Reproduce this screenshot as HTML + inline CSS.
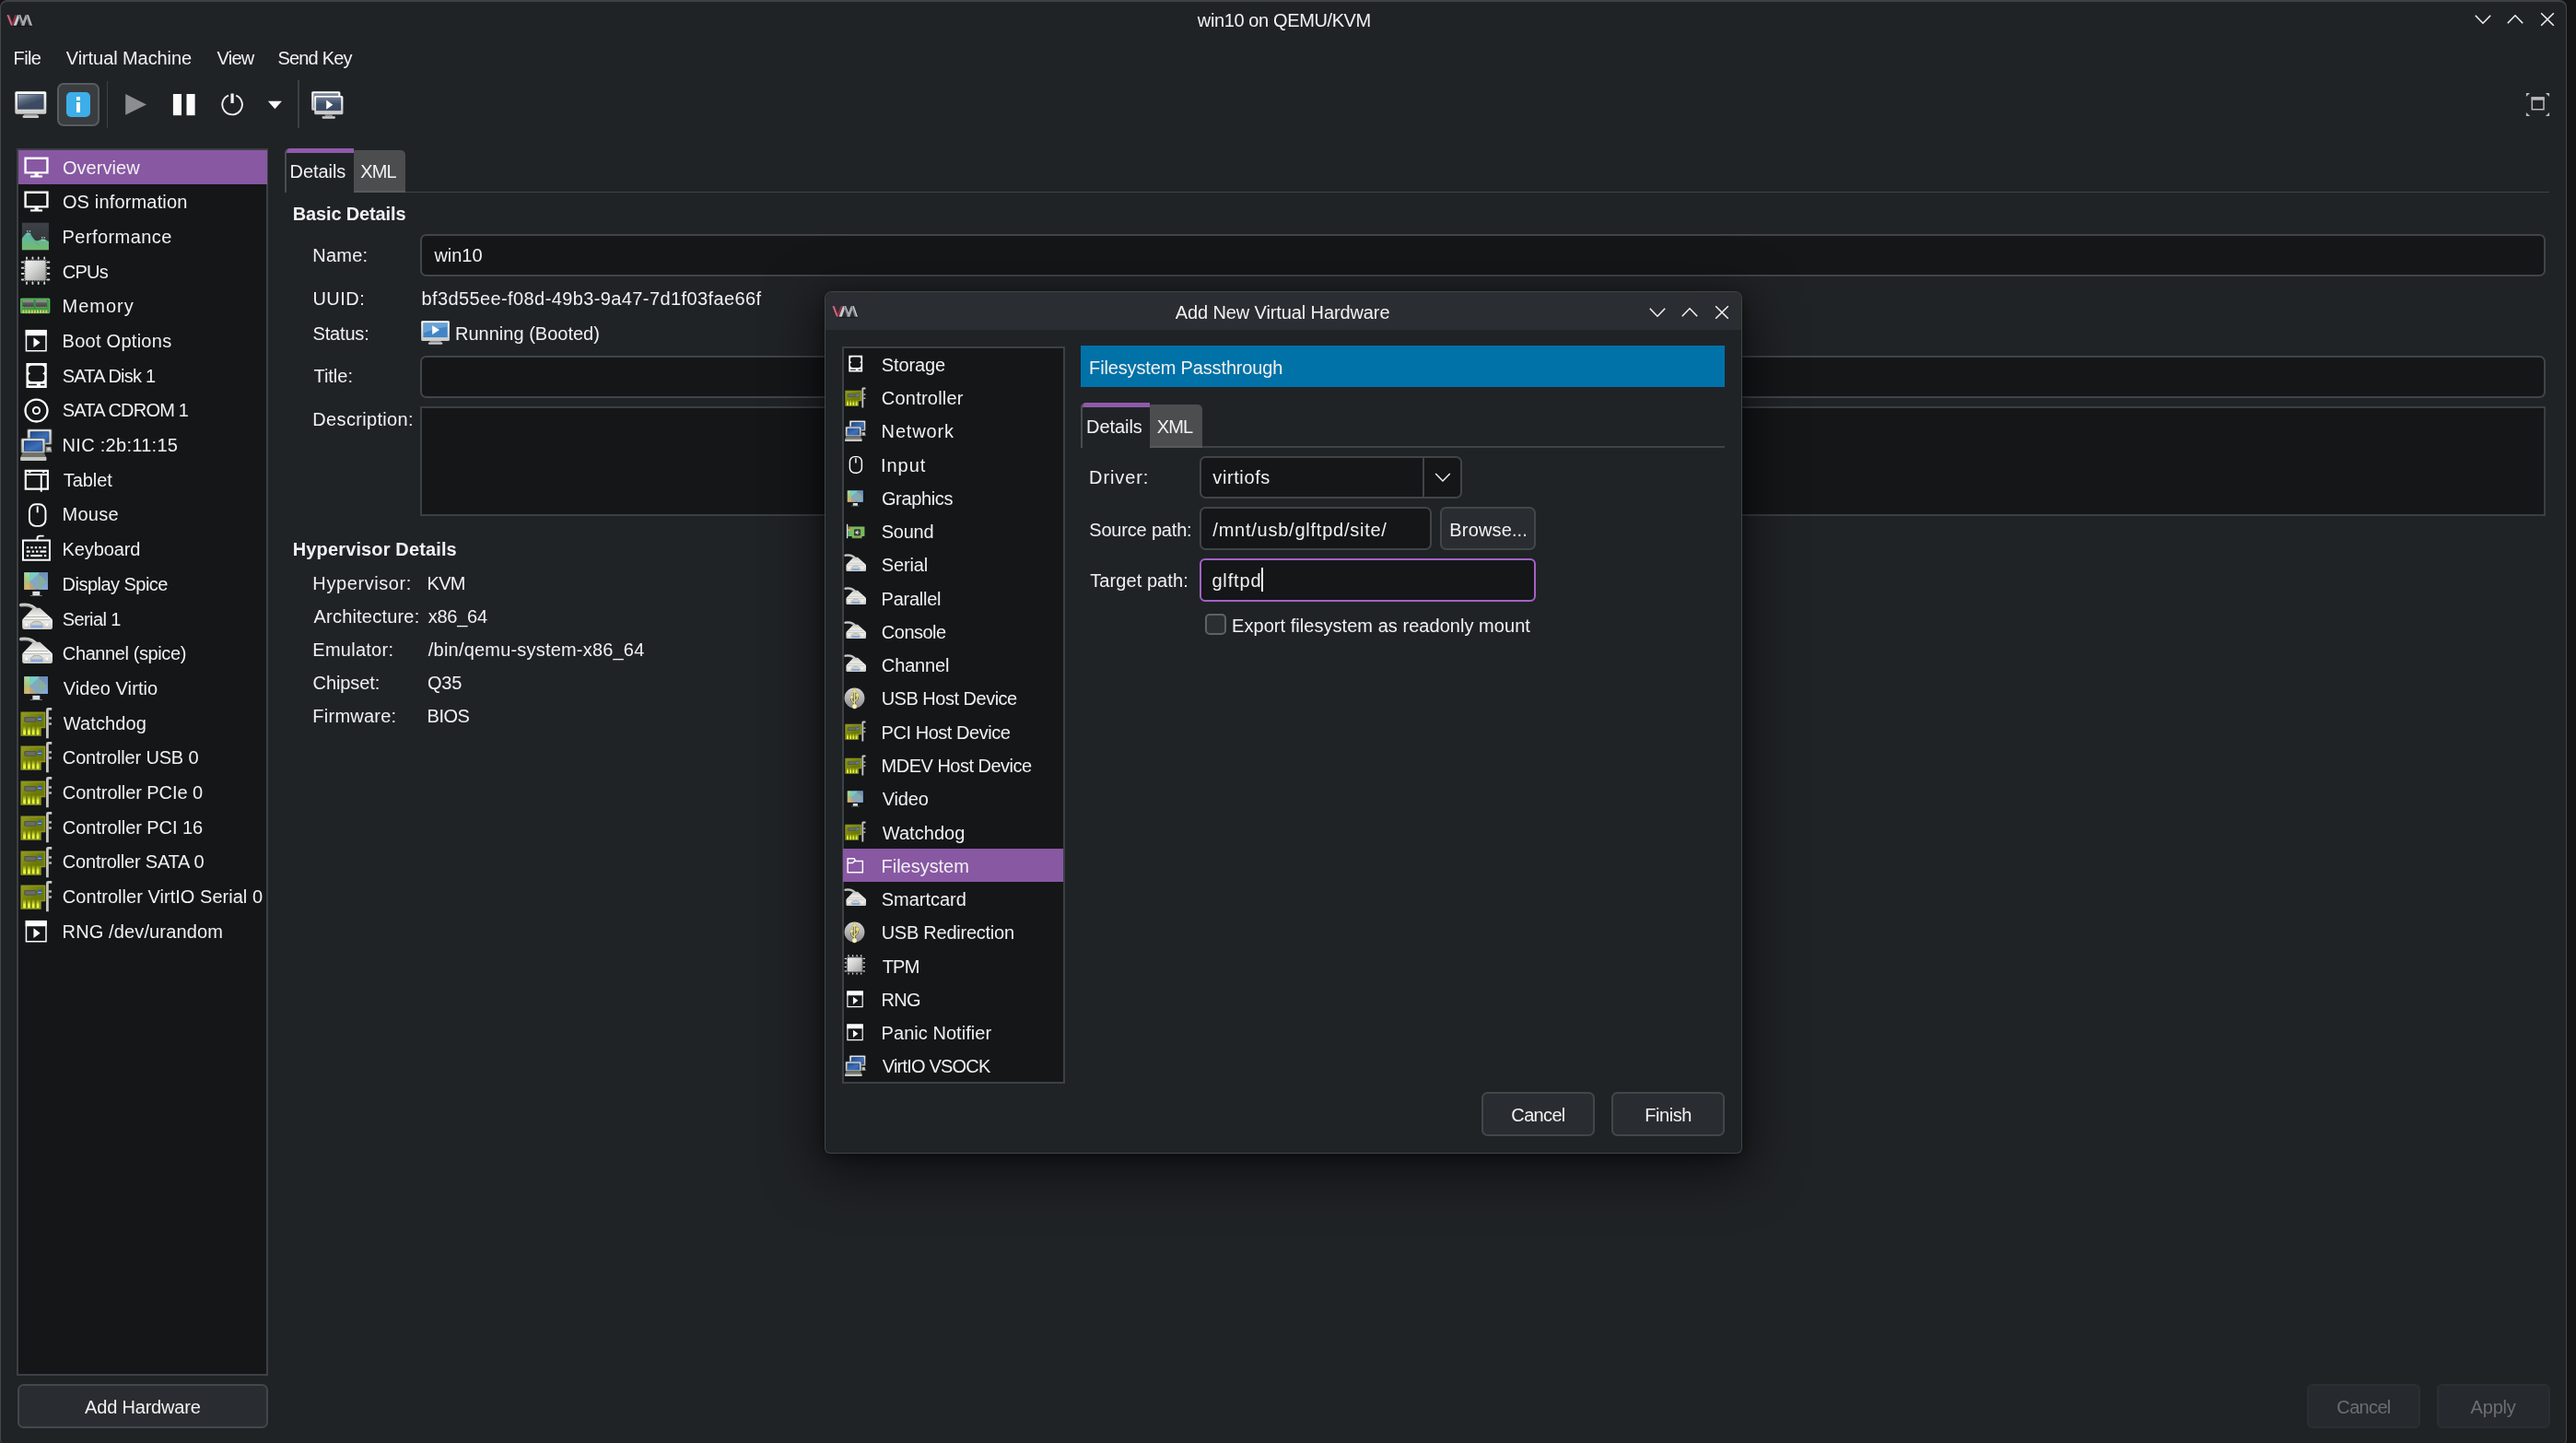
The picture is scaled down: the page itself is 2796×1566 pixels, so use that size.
<!DOCTYPE html>
<html><head><meta charset="utf-8"><title>win10 on QEMU/KVM</title>
<style>
html,body{margin:0;padding:0;}
body{width:2796px;height:1566px;overflow:hidden;background:#141414;position:relative;font-family:"Liberation Sans",sans-serif;font-size:20px;color:#f1f1f2;}
div,span,svg{position:absolute;box-sizing:border-box;}
.L{left:0;top:0;width:2796px;height:1566px;will-change:transform;}
.t{white-space:pre;line-height:20px;height:20px;}
#dlgtexts .t, #maintexts .t{}
</style></head><body>

<svg width="0" height="0" style="position:absolute"><defs><linearGradient id="gPerfBg" x1="0" y1="0" x2="0" y2="1"><stop offset="0" stop-color="#3d4247"/><stop offset="1" stop-color="#2c3034"/></linearGradient>
<linearGradient id="gPerfHill" x1="0" y1="0" x2="0" y2="1"><stop offset="0" stop-color="#58b6ae"/><stop offset=".5" stop-color="#69b68f"/><stop offset="1" stop-color="#76ba6c"/></linearGradient>
<linearGradient id="gCpu" x1="0" y1="0" x2="1" y2="1"><stop offset="0" stop-color="#f2f2f2"/><stop offset=".45" stop-color="#d4d4d2"/><stop offset="1" stop-color="#9d9d9b"/></linearGradient>
<linearGradient id="gChip" x1="0" y1="0" x2="0" y2="1"><stop offset="0" stop-color="#9c9c9a"/><stop offset=".45" stop-color="#5a5a58"/><stop offset="1" stop-color="#444442"/></linearGradient>
<linearGradient id="gBezel" x1="0" y1="0" x2="0" y2="1"><stop offset="0" stop-color="#e4e6e4"/><stop offset="1" stop-color="#bcbeb9"/></linearGradient>
<linearGradient id="gBlue" x1="0" y1="0" x2="1" y2="1"><stop offset="0" stop-color="#1d4a93"/><stop offset=".6" stop-color="#3f70b6"/><stop offset="1" stop-color="#2a5aa6"/></linearGradient>
<linearGradient id="gWallL" x1="0" y1="0" x2="0" y2="1"><stop offset="0" stop-color="#a9da9c"/><stop offset=".55" stop-color="#adc274"/><stop offset="1" stop-color="#e2b262"/></linearGradient><linearGradient id="gWallT" x1="0" y1="0" x2="1" y2="0"><stop offset="0" stop-color="#c8a474"/><stop offset="1" stop-color="#a09c90"/></linearGradient><linearGradient id="gWallR" x1="0" y1="0" x2="0" y2="1"><stop offset="0" stop-color="#6c8cb6"/><stop offset="1" stop-color="#8aaad8"/></linearGradient>
<linearGradient id="gSer" x1="0" y1="0" x2="0" y2="1"><stop offset="0" stop-color="#c4c5c1"/><stop offset=".42" stop-color="#f4f4f2"/><stop offset=".62" stop-color="#ecece9"/><stop offset="1" stop-color="#c9cac6"/></linearGradient>
<linearGradient id="gPci" x1="0" y1="0" x2="1" y2="1"><stop offset="0" stop-color="#8f9a1c"/><stop offset=".5" stop-color="#6f7c05"/><stop offset="1" stop-color="#66720a"/></linearGradient>
<linearGradient id="gPin" x1="0" y1="0" x2="0" y2="1"><stop offset="0" stop-color="#b9c229" stop-opacity=".2"/><stop offset=".55" stop-color="#dfee38"/><stop offset="1" stop-color="#e9fb42"/></linearGradient>
<linearGradient id="gUsb" x1="0" y1="0" x2="0" y2="1"><stop offset="0" stop-color="#d2d2d2"/><stop offset=".5" stop-color="#b4b4b4"/><stop offset="1" stop-color="#878787"/></linearGradient>
<linearGradient id="gTbBezel" x1="0" y1="0" x2="0" y2="1"><stop offset="0" stop-color="#ffffff"/><stop offset="1" stop-color="#c9c9c9"/></linearGradient>
<linearGradient id="gTbScr" x1="0" y1="0" x2=".6" y2="1"><stop offset="0" stop-color="#a3adbb"/><stop offset=".45" stop-color="#56647a"/><stop offset=".7" stop-color="#3d4b62"/><stop offset="1" stop-color="#3a4a63"/></linearGradient>
<linearGradient id="gTbScr2" x1="0" y1="0" x2="0" y2="1"><stop offset="0" stop-color="#6f7f95"/><stop offset=".5" stop-color="#3f4f68"/><stop offset="1" stop-color="#3a4a63"/></linearGradient>
<filter id="fSoft" x="-25%" y="-25%" width="150%" height="150%"><feGaussianBlur stdDeviation=".45"/></filter>
<filter id="fSoft2" x="-25%" y="-25%" width="150%" height="150%"><feGaussianBlur stdDeviation=".3"/></filter>
<filter id="fBlurS" x="-20%" y="-20%" width="140%" height="140%"><feGaussianBlur stdDeviation=".35"/></filter><symbol id="i-monitor" viewBox="0 0 32 32" overflow="visible"><path fill="none" stroke="currentColor" stroke-width="2.2" d="M5.1 7.1h21.8v14.3H5.1z"/><rect x="14.2" y="22" width="3.8" height="2.6" fill="currentColor"/><rect x="10" y="24.1" width="12" height="2" fill="currentColor"/></symbol><symbol id="i-perf" viewBox="0 0 32 32" overflow="visible"><g filter="url(#fSoft2)" transform="translate(-.7 -.2)"><rect x="2.400" y="2.700" width="26.600" height="27" fill="url(#gPerfBg)"/><path d="M2.400 18.300C4.500 15.500 6.300 12.400 8.700 12.400c2.600 0 4.600 7.900 8.400 8.200 2.600.2 4.100-1.800 6.100-1.800 2 0 3.600 1.600 5.800 2.500V29.700H2.400z" fill="url(#gPerfHill)"/><path d="M9.500 14.500l10 11" stroke="#4c9d90" stroke-width="1.400" opacity=".35"/><g fill="#e6f6ee" opacity=".8"><rect x="7.200" y="10.400" width="1.200" height="1.300"/><rect x="9.700" y="10.400" width="1.200" height="1.300"/><rect x="7.500" y="13.300" width="1" height="1"/><rect x="9.900" y="13.300" width="1" height="1"/><rect x="21.700" y="16.700" width="1.200" height="1.300"/><rect x="24.100" y="16.700" width="1.200" height="1.300"/><rect x="22" y="19.600" width="1" height="1"/><rect x="24.300" y="19.600" width="1" height="1"/></g></g></symbol><symbol id="i-cpu" viewBox="0 0 32 32" overflow="visible"><g filter="url(#fSoft)"><g stroke="#e9e9e9" stroke-width="1.700" stroke-linecap="round" opacity=".9"><path d="M6.400 2.200v1.300M12.300 2.200v1.300M18 2.200v1.300M23.950 2.200v1.300M6.400 27v1.300M12.300 27v1.300M18 27v1.300M23.950 27v1.300M1.600 6.900h1.500M1.600 12.600h1.500M1.600 18.300h1.500M1.600 24.200h1.500M27 6.900h1.700M27 12.600h1.700M27 18.300h1.700M27 24.200h1.700"/></g><rect x="4.750" y="5.300" width="20.550" height="19.600" rx="1" fill="url(#gCpu)"/><rect x="4.200" y="4.800" width="21.650" height="20.600" rx="1.200" fill="none" stroke="#f2f2f2" stroke-opacity=".55" stroke-width="1" stroke-dasharray="1.400 1"/></g></symbol><symbol id="i-mem" viewBox="0 0 32 32" overflow="visible"><g filter="url(#fSoft)" transform="translate(-.6 -.2)"><rect x=".7" y="8.200" width="29.400" height="15" rx="1" fill="#3c9a43"/><rect x="1.300" y="8.800" width="28.200" height="13.800" rx=".8" fill="none" stroke="#62b966" stroke-width="1"/><rect x="3" y="10.400" width="11" height="6.600" rx=".6" fill="url(#gChip)"/><rect x="16" y="10.400" width="11" height="6.600" rx=".6" fill="url(#gChip)"/><path d="M3.300 10.500h10.400M16.300 10.500h10.400M3.300 17h10.400M16.300 17h10.400" stroke="#b7b7b2" stroke-width=".9" stroke-dasharray="1 .8" opacity=".8"/><rect x="14.600" y="9.200" width="1" height="9.500" fill="#2f8a37"/><path d="M2.800 21.300h25.200" stroke="#dccf62" stroke-width="3" stroke-dasharray="1.800 1.050"/></g></symbol><symbol id="i-boot" viewBox="0 0 32 32" overflow="visible"><path fill="none" stroke="currentColor" stroke-width="1.400" d="M5.900 6.100h19.700v20.100H5.900z"/><rect x="5.200" y="5.400" width="21.100" height="5.800" fill="currentColor"/><path d="M13.200 13l6.600 4.950-6.600 4.950z" fill="currentColor"/></symbol><symbol id="i-disk" viewBox="0 0 32 32" overflow="visible"><path fill="currentColor" fill-rule="evenodd" d="M5.900 3.700h20.400v24.600H5.900zM11.400 6.200h9.400a3.300 3.300 0 0 1 3.300 3.300v2.300q0 1-1.900 2.200 1.900 1.200 1.900 2.200v2.400a3.300 3.300 0 0 1-3.300 3.300h-9.400a3.300 3.300 0 0 1-3.300-3.300v-2.400q0-1 1.900-2.200-1.900-1.200-1.900-2.200V9.500a3.300 3.300 0 0 1 3.300-3.300zM8.100 24.400h8.200v1.500H8.100zM20 24.400h4.100v1.500H20z"/></symbol><symbol id="i-disk_s" viewBox="0 0 32 32" overflow="visible"><path fill="currentColor" fill-rule="evenodd" d="M5.500 3.500h21v25h-21zM11.800 7h8.600a2.600 2.600 0 0 1 2.600 2.600v3l-1.400 1.300 1.400 1.300v3a2.600 2.600 0 0 1-2.600 2.600h-8.600a2.600 2.600 0 0 1-2.600-2.600v-3l1.400-1.300-1.400-1.300v-3A2.600 2.600 0 0 1 11.800 7zM8.800 23.700h7.600v1.900H8.800zM19.600 23.700h3.800v1.900h-3.800z"/></symbol><symbol id="i-cd" viewBox="0 0 32 32" overflow="visible"><circle cx="16" cy="16" r="10.950" fill="none" stroke="currentColor" stroke-width="2.100"/><circle cx="16" cy="16" r="3.300" fill="none" stroke="currentColor" stroke-width="1.800"/></symbol><symbol id="i-nic" viewBox="0 0 32 32" overflow="visible"><g filter="url(#fSoft2)"><rect x="6.7" y="0.4" width="24.8" height="15.9" rx="1.300" fill="#62635d"/><rect x="7.5" y="1.2" width="23.2" height="14.3" rx="1" fill="url(#gBezel)"/><rect x="9.796" y="3.08" width="18.856" height="11.017" rx=".6" fill="#17386e"/><rect x="10.296" y="3.58" width="17.856" height="10.017" rx=".5" fill="url(#gBlue)"/><path d="M25.400 18.100h5.200l.9 5.500h-6.100z" fill="#8b8c86"/><path d="M26.600 19.600l2.300-1.200 1.900 3.400h-4.200z" fill="#cfd0ca"/><rect x="0.6" y="9.5" width="24.4" height="15.2" rx="1.300" fill="#62635d"/><rect x="1.4" y="10.3" width="22.8" height="13.6" rx="1" fill="url(#gBezel)"/><rect x="3.638" y="12.04" width="18.568" height="10.576" rx=".6" fill="#17386e"/><rect x="4.138" y="12.54" width="17.568" height="9.576" rx=".5" fill="url(#gBlue)"/><path d="M2 24.700h21.800l2.200 4H.1z" fill="#70716b"/><rect x=".1" y="28.400" width="25.900" height="3.500" rx=".8" fill="#c6c8c2"/></g></symbol><symbol id="i-tablet" viewBox="0 0 32 32" overflow="visible"><path fill="none" stroke="currentColor" stroke-width="2" d="M5.300 7.200h22v18H5.300z"/><path stroke="currentColor" stroke-width="1.800" d="M5.300 10.900h22M20.800 10.900v17.300" fill="none"/><rect x="8.300" y="7.200" width="2.200" height="2.200" fill="currentColor"/><rect x="22" y="7.200" width="2.200" height="2.200" fill="currentColor"/></symbol><symbol id="i-mouse" viewBox="0 0 32 32" overflow="visible"><rect x="9.100" y="5.700" width="16" height="21.600" rx="6.200" ry="6.600" fill="none" stroke="currentColor" stroke-width="1.800"/><path d="M17.100 7.800v6.200" stroke="currentColor" stroke-width="1.800" fill="none"/></symbol><symbol id="i-kbd" viewBox="0 0 32 32" overflow="visible"><path fill="none" stroke="currentColor" stroke-width="1.800" d="M2.700 7.800h26.500v19.300H2.700zM16.900 7.800V5.600q0-2.300 2.300-2.300h4.200"/><g fill="currentColor"><rect x="6.200" y="13.800" width="2.200" height="2"/><rect x="10.300" y="13.800" width="2.200" height="2"/><rect x="14.400" y="13.800" width="2.200" height="2"/><rect x="18.500" y="13.800" width="2.200" height="2"/><rect x="22.600" y="13.800" width="3.200" height="2"/><rect x="6.200" y="17.800" width="3.600" height="2"/><rect x="11.600" y="17.800" width="2.200" height="2"/><rect x="15.600" y="17.800" width="2.200" height="2"/><rect x="19.600" y="17.800" width="6.200" height="2"/><rect x="6.200" y="21.900" width="2.200" height="2"/><rect x="10.300" y="21.900" width="11.400" height="2"/><rect x="23.600" y="21.900" width="2.200" height="2"/></g></symbol><symbol id="i-display" viewBox="0 0 32 32" overflow="visible"><g filter="url(#fSoft2)"><rect x="3.300" y="4.200" width="24.600" height="18.200" fill="#0e1012"/><rect x="3.900" y="4.800" width="23.400" height="17" fill="#82a9c0"/><rect x="3.900" y="4.800" width="5.300" height="17" fill="url(#gWallL)"/><path d="M9.200 4.800h10.400L9.200 14.200z" fill="#74cfc5"/><path d="M9.200 14.200l7.400 7.600H9.200z" fill="url(#gWallT)"/><rect x="18.500" y="4.800" width="8.800" height="17" fill="url(#gWallR)"/><path d="M18.500 6.600l7.600 7.300-7.600 7.900z" fill="#87ae98"/><rect x="12.250" y="23.600" width="7.150" height="4" fill="#dfe3e6"/><path d="M12.250 25.600h7.150" stroke="#c4c8cc" stroke-width=".5"/><rect x="9.800" y="27.500" width="12" height=".8" fill="#7c8084"/></g></symbol><symbol id="i-serial" viewBox="0 0 32 32" overflow="visible"><g filter="url(#fSoft2)"><path d="M.600 2.400C8 1.400 13.500 3.200 16.300 8.200" fill="none" stroke="#aeafab" stroke-width="3.300" stroke-linecap="round"/><path d="M.600 2C8 1 13.500 2.600 16.600 7.400" fill="none" stroke="#dcdcda" stroke-width="1.100" stroke-linecap="round"/><path d="M13 5.200h6.500L31 15.800q1 .9 1 2.200v6.600q0 1.900-1.900 1.900H3.900Q2 26.500 2 24.600V18q0-1.300 1-2.200z" fill="url(#gSer)"/><path d="M5 14.200h22.400M3 17.200h26.800" stroke="#b4b5b0" stroke-width="1"/><path d="M10.500 22.600q0-4 5.800-4t5.800 4" fill="#cfd0cc" stroke="#a9aaa6" stroke-width=".9"/><rect x="10.200" y="22.300" width="12.200" height="2.700" rx=".6" fill="#7fa3dc"/><path d="M10.600 23.600h11.400" stroke="#a8c2ea" stroke-width=".9" stroke-dasharray="1.100 .9"/><rect x="5" y="20.800" width="2.200" height="2.200" fill="#fff"/><rect x="25.300" y="20.800" width="2.200" height="2.200" fill="#fff"/><rect x="7.300" y="23" width="2" height="2" fill="#d0d0cc"/><rect x="23" y="23" width="2" height="2" fill="#d0d0cc"/></g></symbol><symbol id="i-pci" viewBox="0 0 32 32" overflow="visible"><g filter="url(#fSoft2)"><path d="M.4 5.100H25v16.200h-4.200V29H.4z" fill="#8c9320"/><path d="M1.900 6.600h21.600v13.200h-4.200V27.500H1.900z" fill="url(#gPci)"/><rect x="3.900" y="10" width="12.200" height="5.300" rx="1.300" fill="#51554d"/><rect x="4.900" y="10.900" width="10.200" height="3.500" rx=".9" fill="#686c63"/><rect x="17.100" y="9.700" width="4.300" height="4.600" rx=".9" fill="#3b5fa6"/><path d="M17.600 12.300h3.300" stroke="#8fb0e0" stroke-width="1"/><g fill="url(#gPin)"><rect x="2.800" y="19.500" width="2.700" height="8.400" rx="1.200"/><rect x="7.300" y="19.500" width="2.700" height="8.400" rx="1.200"/><rect x="11.600" y="19.500" width="2.700" height="8.400" rx="1.200"/><rect x="16.100" y="19.500" width="2.700" height="8.400" rx="1.200"/></g><path d="M31.300 2.100h-3.600q-.8 0-.8.800V31.400" fill="none" stroke="#c9cac5" stroke-width="2.500"/><rect x="28.300" y="10.300" width="2.800" height="2.100" fill="#b9bab5"/><rect x="28.300" y="15.900" width="2.800" height="2.100" fill="#b9bab5"/></g></symbol><symbol id="i-usb" viewBox="0 0 32 32" overflow="visible"><g filter="url(#fSoft)"><circle cx="16" cy="16" r="15.200" fill="url(#gUsb)"/><g fill="#2f2f2c" stroke="#2f2f2c" opacity=".75"><path d="M16 7V27.500M11.600 15.500v3.600q0 1.500 4.400 4.600M20.400 13v3.400q0 1.500-4.400 4.600" fill="none" stroke-width="3.400"/><path d="M16 1.900l3.400 5.500h-6.800z"/><circle cx="16" cy="28.700" r="3.200"/><circle cx="11.600" cy="14.300" r="2.200"/><rect x="18.300" y="9.400" width="4.300" height="4.300" rx="1"/></g><g fill="#e9dd7c" stroke="#e9dd7c"><path d="M16 7V27.500M11.600 15.500v3.600q0 1.500 4.400 4.600M20.400 13v3.400q0 1.500-4.400 4.600" fill="none" stroke-width="1.700"/><path d="M16 1.900l3.400 5.500h-6.800z"/><circle cx="16" cy="28.700" r="3.200"/><circle cx="11.600" cy="14.300" r="2.200"/><rect x="18.300" y="9.400" width="4.300" height="4.300" rx="1"/></g><circle cx="16" cy="28.700" r="3" fill="#f6f1c4"/></g></symbol><symbol id="i-sound" viewBox="0 0 32 32" overflow="visible"><g filter="url(#fSoft2)"><path d="M4.600 9h25.200v14.800h-4v1.600h-15.100v-1.600H4.600z" fill="#79b95c"/><path d="M10.700 25.400h15.100v1.300H10.700z" fill="#8fb65a"/><rect x="13.900" y="12.800" width="9.900" height="10.100" rx="1.800" fill="#383b38"/><path d="M16.300 16.700h1.400l1.900-1.700v5.800l-1.900-1.700h-1.400zM20.700 16.300q1.300 1.600 0 3.200" fill="#d8dad8" stroke="#d8dad8" stroke-width=".5"/><path d="M3.600 5.300v21.400" stroke="#d7e2ee" stroke-width="1.900"/><rect x="4.600" y="10" width="2.900" height="2.500" fill="#e23a72"/><rect x="4.600" y="13" width="2.900" height="2.500" fill="#f0b324"/><rect x="4.600" y="16.500" width="2.900" height="2.500" fill="#32a2e2"/><rect x="4.600" y="19.600" width="2.900" height="2.500" fill="#34c274"/></g></symbol><symbol id="i-folder" viewBox="0 0 32 32" overflow="visible"><path fill="none" stroke="currentColor" stroke-width="1.900" d="M5.400 6.300h9.200l2.200 3.600h9.800v15.800H5.400zM5.400 12.400h7l2.600-2.500h2"/></symbol></defs></svg>
<div style="left:0;top:0;width:2786px;height:1569.5px;background:#202326;border-radius:8px;border:1px solid #44464a;border-top:2px solid #3f4144"></div>
<svg style="left:7.2px;top:15.6px;width:29px;height:13px;overflow:visible" viewBox="0 0 29 13"><g filter="url(#fBlurS)"><path d="M0 .2h3.400l2.900 7.900L9.300.2h2.300L7.300 11.800H4.500z" fill="#8f2b44"/><path d="M.9.2h1.200l3.800 10-.5 1.600z" fill="#d9c3ca" opacity=".7"/><path d="M7.600 11.800L11.900.2h3l-4.100 11.600z" fill="#c6c9cc"/><path d="M12.600.2h2.600l4.200 11.600h-3z" fill="#6c7076"/><path d="M13.900.2h1.300l4.200 11.600h-1.300z" fill="#b9bcc0"/><path d="M16.400 11.800L20.600.2h2.800l-4 11.600z" fill="#a4a8ad"/><path d="M21 .2h2.800l4 11.600h-3.100z" fill="#7d8186"/><path d="M22.600.2h1.200l4 11.600h-1.200z" fill="#d2d4d7"/><path d="M7 12.300h21" stroke="#0c0d0e" stroke-width=".8" opacity=".6"/></g></svg>
<svg style="left:2645px;top:9.4px;width:100px;height:24px;overflow:visible" viewBox="0 0 100 24"><g fill="none" stroke="#f4f4f4" stroke-width="1.500"><path d="M41.8 7.800l8.200 8.400 8.200-8.400"/><path d="M76.8 16.200l8.200-8.400 8.200 8.400"/><path d="M113.2 5.200l13.600 13.600M126.8 5.200l-13.600 13.600"/></g></svg>
<svg style="left:15.8px;top:99.2px;width:35px;height:30px;overflow:visible" viewBox="0 0 35 30"><g filter="url(#fBlurS)"><rect x=".3" y=".2" width="34" height="24.500" rx="1.600" fill="url(#gTbBezel)"/><rect x="3.400" y="3.400" width="27.700" height="15.800" fill="url(#gTbScr)"/><rect x="3.400" y="3.400" width="27.700" height="15.800" fill="none" stroke="#2e3b52" stroke-width=".7"/><rect x="10.200" y="24.600" width="14.400" height="1.900" fill="#8c8c8c"/><rect x="8.600" y="26.300" width="17.500" height="2.700" rx="1.200" fill="#cbcbcb"/></g></svg>
<div style="left:62px;top:90px;width:46.2px;height:46.7px;background:#3a3d40;border:2px solid #585b5f;border-radius:7px"></div>
<div style="left:72px;top:99.9px;width:26.2px;height:26.8px;background:#3daee9;border-radius:5px"></div>
<div style="left:83px;top:104.5px;width:4.3px;height:4.5px;background:#fff"></div>
<div style="left:83px;top:111.3px;width:4.3px;height:10.7px;background:#fff"></div>
<div style="left:115.8px;top:87.6px;width:1.5px;height:51.6px;background:#3c3f43"></div>
<div style="left:323.1px;top:87.2px;width:1.5px;height:52px;background:#3c3f43"></div>
<svg style="left:130px;top:95px;width:190px;height:36px" viewBox="130 95 190 36"><path d="M136.200 102l22.800 11.400-22.800 11.400z" fill="#8b8d8f"/><rect x="187.900" y="102" width="9.100" height="23.200" fill="#fcfcfc"/><rect x="202.500" y="102" width="9.100" height="23.200" fill="#fcfcfc"/><path d="M256.200 103.600A10.800 10.800 0 1 1 248 103.600" fill="none" stroke="#f0f0f0" stroke-width="1.900"/><path d="M252.100 101.500v10.500" stroke="#f4f4f4" stroke-width="3.200"/><path d="M290.900 109.800h15l-7.500 8.400z" fill="#fcfcfc"/></svg>
<svg style="left:337.7px;top:98.7px;width:35px;height:30px;overflow:visible" viewBox="0 0 35 30"><g filter="url(#fBlurS)"><rect x=".2" y=".2" width="31.200" height="20.500" rx="1.500" fill="url(#gTbBezel)"/><rect x="2.300" y="2.200" width="27" height="16" fill="#7b8798"/><rect x="3.200" y="4.900" width="31.200" height="20.300" rx="1.500" fill="url(#gTbBezel)"/><rect x="5.100" y="6.600" width="27.100" height="14.600" fill="url(#gTbScr2)"/><path d="M16.200 9.600l7.100 5.050-7.100 5.050z" fill="#fff"/><rect x="14.700" y="25.200" width="8.100" height="2.100" fill="#8c8c8c"/><rect x="11.500" y="27.200" width="14.500" height="2.500" rx="1.100" fill="#cbcbcb"/></g></svg>
<svg style="left:2741px;top:100px;width:27px;height:27px" viewBox="0 0 27 27"><path d="M7.300 6h12.700v12.700H7.300z" fill="none" stroke="#b9babb" stroke-width="1.500"/><rect x="6.600" y="5.300" width="14.100" height="3.400" fill="#b9babb"/><g fill="#b9babb"><path d="M.9.900h4.200L.9 5.100zM26.100.900v4.200L21.900.900zM.9 26.100v-4.200l4.200 4.200zM26.100 26.100h-4.200l4.200-4.200z"/></g></svg>
<div style="left:18px;top:161px;width:273px;height:1332px;background:#141618;border:2px solid #3c3f43"></div>
<div style="left:20px;top:162.5px;width:269.6px;height:37.59px;background:#8858a3"></div>
<svg style="left:21.5px;top:163.75px;width:35px;height:35px;color:#fcfcfc;overflow:visible"><use href="#i-monitor"/></svg>
<svg style="left:21.5px;top:201.44px;width:35px;height:35px;color:#fcfcfc;overflow:visible"><use href="#i-monitor"/></svg>
<svg style="left:21.5px;top:239.12px;width:35px;height:35px;color:#fcfcfc;overflow:visible"><use href="#i-perf"/></svg>
<svg style="left:21.5px;top:276.81px;width:35px;height:35px;color:#fcfcfc;overflow:visible"><use href="#i-cpu"/></svg>
<svg style="left:21.5px;top:314.5px;width:35px;height:35px;color:#fcfcfc;overflow:visible"><use href="#i-mem"/></svg>
<svg style="left:21.5px;top:352.19px;width:35px;height:35px;color:#fcfcfc;overflow:visible"><use href="#i-boot"/></svg>
<svg style="left:21.5px;top:389.88px;width:35px;height:35px;color:#fcfcfc;overflow:visible"><use href="#i-disk"/></svg>
<svg style="left:21.5px;top:427.57px;width:35px;height:35px;color:#fcfcfc;overflow:visible"><use href="#i-cd"/></svg>
<svg style="left:21.5px;top:465.26px;width:35px;height:35px;color:#fcfcfc;overflow:visible"><use href="#i-nic"/></svg>
<svg style="left:21.5px;top:502.95px;width:35px;height:35px;color:#fcfcfc;overflow:visible"><use href="#i-tablet"/></svg>
<svg style="left:21.5px;top:540.64px;width:35px;height:35px;color:#fcfcfc;overflow:visible"><use href="#i-mouse"/></svg>
<svg style="left:21.5px;top:578.33px;width:35px;height:35px;color:#fcfcfc;overflow:visible"><use href="#i-kbd"/></svg>
<svg style="left:21.5px;top:616.02px;width:35px;height:35px;color:#fcfcfc;overflow:visible"><use href="#i-display"/></svg>
<svg style="left:21.5px;top:653.71px;width:35px;height:35px;color:#fcfcfc;overflow:visible"><use href="#i-serial"/></svg>
<svg style="left:21.5px;top:691.4px;width:35px;height:35px;color:#fcfcfc;overflow:visible"><use href="#i-serial"/></svg>
<svg style="left:21.5px;top:729.09px;width:35px;height:35px;color:#fcfcfc;overflow:visible"><use href="#i-display"/></svg>
<svg style="left:21.5px;top:766.78px;width:35px;height:35px;color:#fcfcfc;overflow:visible"><use href="#i-pci"/></svg>
<svg style="left:21.5px;top:804.47px;width:35px;height:35px;color:#fcfcfc;overflow:visible"><use href="#i-pci"/></svg>
<svg style="left:21.5px;top:842.16px;width:35px;height:35px;color:#fcfcfc;overflow:visible"><use href="#i-pci"/></svg>
<svg style="left:21.5px;top:879.85px;width:35px;height:35px;color:#fcfcfc;overflow:visible"><use href="#i-pci"/></svg>
<svg style="left:21.5px;top:917.54px;width:35px;height:35px;color:#fcfcfc;overflow:visible"><use href="#i-pci"/></svg>
<svg style="left:21.5px;top:955.23px;width:35px;height:35px;color:#fcfcfc;overflow:visible"><use href="#i-pci"/></svg>
<svg style="left:21.5px;top:992.92px;width:35px;height:35px;color:#fcfcfc;overflow:visible"><use href="#i-boot"/></svg>
<div style="left:19px;top:1502px;width:272.3px;height:47.6px;background:#292c30;border:2px solid #43464a;border-radius:6.500px"></div>
<div style="left:2504px;top:1502px;width:123px;height:47.6px;background:#26292d;border:2px solid #2b2e32;border-radius:6px"></div>
<div style="left:2644.5px;top:1502px;width:123px;height:47.6px;background:#26292d;border:2px solid #2b2e32;border-radius:6px"></div>
<div style="left:309.3px;top:207.5px;width:2458.2px;height:1.700px;background:#3f4246"></div>
<div style="left:384.1px;top:162.8px;width:56px;height:46.5px;background:#4b4d4f;border-radius:0 5px 0 0;border-bottom:2px solid #57595b"></div>
<div style="left:309.3px;top:161px;width:74.8px;height:48.3px;background:#202326;border-left:2px solid #4a4d50;border-radius:5px 0 0 0;overflow:hidden"><div style="left:-2px;top:0;width:78.8px;height:4.600px;background:#8e5ba9"></div></div>
<div style="left:456.3px;top:254.3px;width:2306.9px;height:45.5px;background:#141618;border:2px solid #414448;border-radius:6.500px"></div>
<svg style="left:456.700px;top:347.900px;width:31.400px;height:26.500px;overflow:visible" viewBox="0 0 32 27" preserveAspectRatio="none"><g filter="url(#fBlurS)"><rect x=".2" y=".2" width="31.300" height="22.300" rx="1.400" fill="url(#gTbBezel)"/><rect x="2.400" y="2.300" width="26.900" height="16.200" fill="#4285c6"/><path d="M2.400 2.300h26.900v4.500q-14 1.500-26.900 7z" fill="#8db9e0" opacity=".55"/><path d="M12.400 5.300l8 5-8 5z" fill="#fff"/><rect x="9.700" y="22.400" width="12.400" height="1.700" fill="#8c8c8c"/><rect x="8" y="24" width="15.800" height="2.300" rx="1" fill="#c9c9c9"/></g></svg>
<div style="left:456.3px;top:386px;width:2306.9px;height:45.5px;background:#141618;border:2px solid #414448;border-radius:6.500px"></div>
<div style="left:456.3px;top:441px;width:2306.9px;height:118.6px;background:#141618;border:2px solid #3b3e42"></div>
<div class="L">
<span class="t" style="left:1299.86px;top:12px;letter-spacing:-0.385px;">win10 on QEMU/KVM</span>
<span class="t" style="left:14.61px;top:52.6px;letter-spacing:-0.637px;">File</span>
<span class="t" style="left:71.77px;top:52.6px;letter-spacing:-0.080px;">Virtual Machine</span>
<span class="t" style="left:235.57px;top:52.6px;letter-spacing:-0.800px;">View</span>
<span class="t" style="left:301.45px;top:52.6px;letter-spacing:-0.800px;">Send Key</span>
<span class="t" style="left:67.9px;top:171.55px;letter-spacing:0.056px;">Overview</span>
<span class="t" style="left:67.9px;top:209.24px;letter-spacing:0.162px;">OS information</span>
<span class="t" style="left:67.61px;top:246.93px;letter-spacing:0.415px;">Performance</span>
<span class="t" style="left:67.87px;top:284.62px;letter-spacing:-0.800px;">CPUs</span>
<span class="t" style="left:67.61px;top:322.31px;letter-spacing:0.980px;">Memory</span>
<span class="t" style="left:67.61px;top:360px;letter-spacing:0.263px;">Boot Options</span>
<span class="t" style="left:67.75px;top:397.69px;letter-spacing:-0.800px;">SATA Disk 1</span>
<span class="t" style="left:67.75px;top:435.37px;letter-spacing:-0.800px;">SATA CDROM 1</span>
<span class="t" style="left:67.61px;top:473.06px;letter-spacing:0.283px;">NIC :2b:11:15</span>
<span class="t" style="left:68.7px;top:510.75px;letter-spacing:-0.039px;">Tablet</span>
<span class="t" style="left:67.61px;top:548.44px;letter-spacing:0.222px;">Mouse</span>
<span class="t" style="left:67.61px;top:586.13px;letter-spacing:-0.113px;">Keyboard</span>
<span class="t" style="left:67.61px;top:623.82px;letter-spacing:-0.530px;">Display Spice</span>
<span class="t" style="left:67.75px;top:661.51px;letter-spacing:-0.601px;">Serial 1</span>
<span class="t" style="left:67.87px;top:699.2px;letter-spacing:-0.399px;">Channel (spice)</span>
<span class="t" style="left:68.77px;top:736.89px;letter-spacing:0.076px;">Video Virtio</span>
<span class="t" style="left:68.8px;top:774.58px;letter-spacing:0.100px;">Watchdog</span>
<span class="t" style="left:67.87px;top:812.27px;letter-spacing:-0.158px;">Controller USB 0</span>
<span class="t" style="left:67.87px;top:849.96px;letter-spacing:-0.073px;">Controller PCIe 0</span>
<span class="t" style="left:67.87px;top:887.65px;letter-spacing:-0.070px;">Controller PCI 16</span>
<span class="t" style="left:67.87px;top:925.34px;letter-spacing:-0.211px;">Controller SATA 0</span>
<span class="t" style="left:67.87px;top:963.03px;letter-spacing:0.033px;">Controller VirtIO Serial 0</span>
<span class="t" style="left:67.61px;top:1000.72px;letter-spacing:0.126px;">RNG /dev/urandom</span>
<span class="t" style="left:92.04px;top:1516.8px;letter-spacing:-0.183px;">Add Hardware</span>
<span class="t" style="left:2536.37px;top:1516.9px;letter-spacing:-0.663px;color:#6b6e72;">Cancel</span>
<span class="t" style="left:2681.54px;top:1516.9px;letter-spacing:-0.175px;color:#6b6e72;">Apply</span>
<span class="t" style="left:314.61px;top:175.8px;letter-spacing:-0.063px;">Details</span>
<span class="t" style="left:391.14px;top:175.8px;letter-spacing:-0.800px;">XML</span>
<span class="t" style="left:317.75px;top:222.4px;letter-spacing:-0.145px;font-weight:700;">Basic Details</span>
<span class="t" style="left:339.36px;top:267.3px;letter-spacing:0.224px;">Name:</span>
<span class="t" style="left:471.46px;top:267.3px;letter-spacing:-0.040px;">win10</span>
<span class="t" style="left:339.41px;top:313.8px;letter-spacing:0.489px;">UUID:</span>
<span class="t" style="left:457.51px;top:313.8px;letter-spacing:0.394px;">bf3d55ee-f08d-49b3-9a47-7d1f03fae66f</span>
<span class="t" style="left:339.5px;top:351.55px;letter-spacing:-0.171px;">Status:</span>
<span class="t" style="left:494.01px;top:351.55px;letter-spacing:0.010px;">Running (Booted)</span>
<span class="t" style="left:340.45px;top:397.8px;letter-spacing:-0.018px;">Title:</span>
<span class="t" style="left:339.36px;top:445.3px;letter-spacing:0.318px;">Description:</span>
<span class="t" style="left:317.75px;top:585.8px;letter-spacing:0.139px;font-weight:700;">Hypervisor Details</span>
<span class="t" style="left:339.36px;top:622.5px;letter-spacing:0.589px;">Hypervisor:</span>
<span class="t" style="left:463.61px;top:622.5px;letter-spacing:-0.756px;">KVM</span>
<span class="t" style="left:340.54px;top:658.58px;letter-spacing:0.203px;">Architecture:</span>
<span class="t" style="left:464.66px;top:658.58px;letter-spacing:-0.231px;">x86_64</span>
<span class="t" style="left:339.36px;top:694.66px;letter-spacing:0.250px;">Emulator:</span>
<span class="t" style="left:464.85px;top:694.66px;letter-spacing:0.198px;">/bin/qemu-system-x86_64</span>
<span class="t" style="left:339.62px;top:730.74px;letter-spacing:-0.092px;">Chipset:</span>
<span class="t" style="left:463.9px;top:730.74px;letter-spacing:-0.194px;">Q35</span>
<span class="t" style="left:339.36px;top:766.82px;letter-spacing:0.237px;">Firmware:</span>
<span class="t" style="left:463.61px;top:766.82px;letter-spacing:-0.519px;">BIOS</span>
</div>
<div style="left:895.5px;top:317px;width:994px;height:934px;background:#202326;border-radius:7px 7px 5px 5px;box-shadow:0 0 0 1px rgba(70,73,77,.9),0 14px 56px 8px rgba(0,0,0,.6),0 3px 14px rgba(0,0,0,.45);overflow:hidden"><div style="left:0;top:0;width:100%;height:41px;background:#2a2d31"></div></div>
<svg style="left:902.8px;top:332.2px;width:29px;height:13px;overflow:visible" viewBox="0 0 29 13"><g filter="url(#fBlurS)"><path d="M0 .2h3.400l2.900 7.900L9.300.2h2.300L7.300 11.800H4.500z" fill="#8f2b44"/><path d="M.9.2h1.200l3.800 10-.5 1.600z" fill="#d9c3ca" opacity=".7"/><path d="M7.600 11.800L11.900.2h3l-4.100 11.600z" fill="#c6c9cc"/><path d="M12.600.2h2.600l4.200 11.600h-3z" fill="#6c7076"/><path d="M13.900.2h1.300l4.200 11.600h-1.300z" fill="#b9bcc0"/><path d="M16.400 11.800L20.600.2h2.800l-4 11.600z" fill="#a4a8ad"/><path d="M21 .2h2.800l4 11.600h-3.100z" fill="#7d8186"/><path d="M22.600.2h1.200l4 11.600h-1.200z" fill="#d2d4d7"/><path d="M7 12.300h21" stroke="#0c0d0e" stroke-width=".8" opacity=".6"/></g></svg>
<svg style="left:1748.75px;top:326.6px;width:100px;height:24px;overflow:visible" viewBox="0 0 100 24"><g fill="none" stroke="#f4f4f4" stroke-width="1.500"><path d="M41.8 7.800l8.200 8.400 8.200-8.400"/><path d="M76.8 16.200l8.200-8.400 8.200 8.400"/><path d="M113.2 5.200l13.600 13.600M126.8 5.200l-13.600 13.600"/></g></svg>
<div style="left:913.5px;top:375.7px;width:242px;height:800px;background:#141618;border:2px solid #3d4044"></div>
<div style="left:915.2px;top:921.05px;width:239px;height:36.27px;background:#8858a3"></div>
<svg style="left:916.65px;top:383.29px;width:23.3px;height:23.3px;color:#fcfcfc;overflow:visible"><use href="#i-disk"/></svg>
<svg style="left:916.8px;top:419.7px;width:23px;height:23px;color:#fcfcfc;overflow:visible"><use href="#i-pci"/></svg>
<svg style="left:916.8px;top:455.98px;width:23px;height:23px;color:#fcfcfc;overflow:visible"><use href="#i-nic"/></svg>
<svg style="left:915.3px;top:490.75px;width:26px;height:26px;color:#fcfcfc;overflow:visible"><use href="#i-mouse"/></svg>
<svg style="left:916.8px;top:528.51px;width:23px;height:23px;color:#fcfcfc;overflow:visible"><use href="#i-display"/></svg>
<svg style="left:916.8px;top:564.78px;width:23px;height:23px;color:#fcfcfc;overflow:visible"><use href="#i-sound"/></svg>
<svg style="left:916.8px;top:601.05px;width:23px;height:23px;color:#fcfcfc;overflow:visible"><use href="#i-serial"/></svg>
<svg style="left:916.8px;top:637.33px;width:23px;height:23px;color:#fcfcfc;overflow:visible"><use href="#i-serial"/></svg>
<svg style="left:916.8px;top:673.6px;width:23px;height:23px;color:#fcfcfc;overflow:visible"><use href="#i-serial"/></svg>
<svg style="left:916.8px;top:709.87px;width:23px;height:23px;color:#fcfcfc;overflow:visible"><use href="#i-serial"/></svg>
<svg style="left:916.1px;top:745.63px;width:23px;height:23px;color:#fcfcfc;overflow:visible"><use href="#i-usb"/></svg>
<svg style="left:916.8px;top:782.4px;width:23px;height:23px;color:#fcfcfc;overflow:visible"><use href="#i-pci"/></svg>
<svg style="left:916.8px;top:818.67px;width:23px;height:23px;color:#fcfcfc;overflow:visible"><use href="#i-pci"/></svg>
<svg style="left:916.8px;top:854.94px;width:23px;height:23px;color:#fcfcfc;overflow:visible"><use href="#i-display"/></svg>
<svg style="left:916.8px;top:891.22px;width:23px;height:23px;color:#fcfcfc;overflow:visible"><use href="#i-pci"/></svg>
<svg style="left:916.05px;top:926.74px;width:24.5px;height:24.5px;color:#fcfcfc;overflow:visible"><use href="#i-folder"/></svg>
<svg style="left:916.8px;top:963.75px;width:23px;height:23px;color:#fcfcfc;overflow:visible"><use href="#i-serial"/></svg>
<svg style="left:916.1px;top:999.52px;width:23px;height:23px;color:#fcfcfc;overflow:visible"><use href="#i-usb"/></svg>
<svg style="left:915.8px;top:1035.29px;width:25px;height:25px;color:#fcfcfc;overflow:visible"><use href="#i-cpu"/></svg>
<svg style="left:915.05px;top:1070.82px;width:26.5px;height:26.5px;color:#fcfcfc;overflow:visible"><use href="#i-boot"/></svg>
<svg style="left:915.05px;top:1107.09px;width:26.5px;height:26.5px;color:#fcfcfc;overflow:visible"><use href="#i-boot"/></svg>
<svg style="left:916.8px;top:1145.11px;width:23px;height:23px;color:#fcfcfc;overflow:visible"><use href="#i-nic"/></svg>
<div style="left:1173px;top:375.2px;width:699px;height:45px;background:#0072a8"></div>
<div style="left:1173.3px;top:484.3px;width:698.7px;height:1.700px;background:#3f4246"></div>
<div style="left:1248.1px;top:438.8px;width:56.6px;height:47.3px;background:#4b4d4f;border-radius:0 5px 0 0;border-bottom:2px solid #57595b"></div>
<div style="left:1173.3px;top:437px;width:74.8px;height:49.1px;background:#202326;border-left:2px solid #4a4d50;border-radius:5px 0 0 0;overflow:hidden"><div style="left:-2px;top:0;width:78.8px;height:4.600px;background:#8e5ba9"></div></div>
<div style="left:1302px;top:495px;width:285px;height:45.6px;background:#141618;border:2px solid #414448;border-radius:6.500px"></div>
<div style="left:1543.8px;top:496px;width:1.8px;height:43.6px;background:#414448"></div>
<svg style="left:1555px;top:510px;width:22px;height:16px" viewBox="0 0 22 16"><path d="M3.200 4l7.800 8 7.800-8" fill="none" stroke="#f4f4f4" stroke-width="1.500"/></svg>
<div style="left:1302px;top:550px;width:252px;height:47px;background:#141618;border:2px solid #414448;border-radius:6.500px"></div>
<div style="left:1563px;top:550px;width:104.3px;height:47px;background:#292c30;border:2px solid #43464a;border-radius:6.500px"></div>
<div style="left:1302px;top:606px;width:365.3px;height:46.6px;background:#141618;border:2px solid #a361c5;border-radius:6px"></div>
<div style="left:1369.2px;top:615.6px;width:1.6px;height:26.2px;background:#f4f4f4"></div>
<div style="left:1308px;top:666px;width:23px;height:22.6px;background:#2b2e33;border:2px solid #5e6165;border-radius:5px"></div>
<div style="left:1608px;top:1185px;width:123px;height:47.6px;background:#292c30;border:2px solid #43464a;border-radius:6.500px"></div>
<div style="left:1748.5px;top:1185px;width:123px;height:47.6px;background:#292c30;border:2px solid #43464a;border-radius:6.500px"></div>
<div class="L">
<span class="t" style="left:1275.79px;top:328.8px;letter-spacing:-0.110px;">Add New Virtual Hardware</span>
<span class="t" style="left:956.75px;top:385.74px;letter-spacing:-0.125px;">Storage</span>
<span class="t" style="left:956.87px;top:422px;letter-spacing:0.214px;">Controller</span>
<span class="t" style="left:956.61px;top:458.28px;letter-spacing:0.824px;">Network</span>
<span class="t" style="left:955.9px;top:494.55px;letter-spacing:1.000px;">Input</span>
<span class="t" style="left:956.88px;top:530.81px;letter-spacing:-0.340px;">Graphics</span>
<span class="t" style="left:956.75px;top:567.08px;letter-spacing:-0.263px;">Sound</span>
<span class="t" style="left:956.75px;top:603.35px;letter-spacing:-0.138px;">Serial</span>
<span class="t" style="left:956.61px;top:639.62px;letter-spacing:-0.260px;">Parallel</span>
<span class="t" style="left:956.87px;top:675.89px;letter-spacing:-0.519px;">Console</span>
<span class="t" style="left:956.87px;top:712.16px;letter-spacing:-0.146px;">Channel</span>
<span class="t" style="left:956.66px;top:748.43px;letter-spacing:-0.493px;">USB Host Device</span>
<span class="t" style="left:956.61px;top:784.7px;letter-spacing:-0.462px;">PCI Host Device</span>
<span class="t" style="left:956.61px;top:820.97px;letter-spacing:-0.507px;">MDEV Host Device</span>
<span class="t" style="left:957.77px;top:857.24px;letter-spacing:-0.193px;">Video</span>
<span class="t" style="left:957.8px;top:893.51px;letter-spacing:0.029px;">Watchdog</span>
<span class="t" style="left:956.61px;top:929.78px;letter-spacing:-0.035px;">Filesystem</span>
<span class="t" style="left:956.75px;top:966.05px;letter-spacing:-0.020px;">Smartcard</span>
<span class="t" style="left:956.66px;top:1002.32px;letter-spacing:-0.248px;">USB Redirection</span>
<span class="t" style="left:957.7px;top:1038.59px;letter-spacing:-0.800px;">TPM</span>
<span class="t" style="left:956.61px;top:1074.87px;letter-spacing:-0.800px;">RNG</span>
<span class="t" style="left:956.61px;top:1111.13px;letter-spacing:0.044px;">Panic Notifier</span>
<span class="t" style="left:957.77px;top:1147.4px;letter-spacing:-0.800px;">VirtIO VSOCK</span>
<span class="t" style="left:1182.11px;top:388.8px;letter-spacing:-0.148px;">Filesystem Passthrough</span>
<span class="t" style="left:1179.11px;top:452.8px;letter-spacing:-0.063px;">Details</span>
<span class="t" style="left:1255.64px;top:452.8px;letter-spacing:-0.800px;">XML</span>
<span class="t" style="left:1182.11px;top:507.8px;letter-spacing:0.899px;">Driver:</span>
<span class="t" style="left:1316.3px;top:507.8px;letter-spacing:0.602px;">virtiofs</span>
<span class="t" style="left:1182.25px;top:564.55px;letter-spacing:-0.184px;">Source path:</span>
<span class="t" style="left:1316.35px;top:564.55px;letter-spacing:0.758px;">/mnt/usb/glftpd/site/</span>
<span class="t" style="left:1573.36px;top:564.55px;letter-spacing:0.140px;">Browse...</span>
<span class="t" style="left:1183.2px;top:619.55px;letter-spacing:0.083px;">Target path:</span>
<span class="t" style="left:1315.4px;top:619.55px;letter-spacing:0.860px;">glftpd</span>
<span class="t" style="left:1337.11px;top:669.05px;letter-spacing:0.041px;">Export filesystem as readonly mount</span>
<span class="t" style="left:1640.37px;top:1199.55px;letter-spacing:-0.663px;">Cancel</span>
<span class="t" style="left:1785.36px;top:1199.55px;letter-spacing:-0.472px;">Finish</span>
</div>
</body></html>
